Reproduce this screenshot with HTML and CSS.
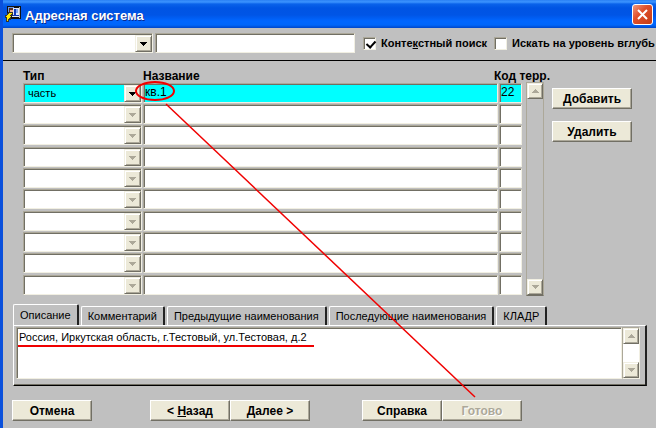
FILE: index.html
```html
<!DOCTYPE html>
<html lang="ru">
<head>
    <meta charset="UTF-8">
    <meta name="viewport" content="width=device-width, initial-scale=1.0">
    <title>Адресная система</title>
    <link rel="stylesheet" href="styles.css">
</head>
<body>
    <svg class="sprite" aria-hidden="true">
        <symbol id="down" viewBox="0 0 7 4"><path d="M0 0h7v1h-1v1h-1v1h-1v1h-1v-1h-1v-1h-1v-1h-1z"/></symbol>
        <symbol id="up" viewBox="0 0 7 4"><path d="M3 0h1v1h1v1h1v1h1v1h-7v-1h1v-1h1v-1h1z"/></symbol>
    </svg>

    <div class="window">
        <header class="title-bar">
            <svg class="app-icon" viewBox="0 0 16 16" shape-rendering="crispEdges" aria-hidden="true">
                <path fill="#111" d="M2 0h14v13H2z"/>
                <path fill="#6f9be8" d="M3 1h6v8H3z"/>
                <path fill="#dfe8fa" d="M8 2h6v9H7V9h1z"/>
                <path fill="#1238b8" d="M9 3h2v6h3v1H8V9h1z"/>
                <path fill="#7fa6ee" d="M11 3h2v4h-2z"/>
                <path fill="#f0b090" d="M5 3h3v3H5z"/>
                <path fill="#5a3020" d="M4 2h4v2H5v2H4z"/>
                <path fill="#b8b8b8" d="M14 1h1v11h-1z"/>
                <path fill="#333" d="M3 6h5v4H6v4H4v2H1v-4H0V9h2z"/>
                <path fill="#ffe800" d="M4 7h3v1H6v1H5v1h1v1H5v1H4v1H3v2H2v-4H1v-1h1V9h1V8h1z"/>
            </svg>
            <h1>Адресная система</h1>
            <button class="close" aria-label="Закрыть">
                <svg viewBox="0 0 11 11" aria-hidden="true"><path d="M1 1l9 9M10 1l-9 9"/></svg>
            </button>
        </header>

        <main>
            <div class="search">
                <div class="combo">
                    <select class="sunken" aria-label="Тип поиска"><option></option></select>
                    <span class="arrow"><svg><use href="#down"/></svg></span>
                </div>
                <input class="sunken query" type="text" aria-label="Строка поиска">
                <label class="check first"><input type="checkbox" checked><span>Конте<u>к</u>стный поиск</span></label>
                <label class="check"><input type="checkbox"><span>Искать на уровень вглубь</span></label>
            </div>

            <div class="addresses">
                <div class="grid">
                    <table>
                        <thead>
                            <tr><th class="type">Тип</th><th>Название</th><th class="code"><span>Код терр.</span></th></tr>
                        </thead>
                        <tbody id="rows">
                            <tr class="current">
                                <td><div class="combo">
                                    <select class="sunken" aria-label="Тип"><option>часть</option></select>
                                    <span class="arrow"><svg><use href="#down"/></svg></span>
                                </div></td>
                                <td><input class="sunken" type="text" aria-label="Название" value="кв.1"></td>
                                <td><input class="sunken" type="text" aria-label="Код терр." value="22"></td>
                            </tr>
                        </tbody>
                    </table>
                </div>
                <div class="scrollbar">
                    <button aria-label="Вверх" disabled><svg><use href="#up"/></svg></button>
                    <button aria-label="Вниз" disabled><svg><use href="#down"/></svg></button>
                </div>
                <div class="actions">
                    <button class="btn">Добавить</button>
                    <button class="btn">Удалить</button>
                </div>
            </div>

            <div class="details">
                <div class="tabs" role="tablist">
                    <button class="tab active" role="tab" aria-selected="true">Описание</button>
                    <button class="tab" role="tab">Комментарий</button>
                    <button class="tab" role="tab">Предыдущие наименования</button>
                    <button class="tab" role="tab">Последующие наименования</button>
                    <button class="tab" role="tab">КЛАДР</button>
                </div>
                <div class="panel">
                    <textarea class="sunken" aria-label="Описание">Россия, Иркутская область, г.Тестовый, ул.Тестовая, д.2</textarea>
                    <div class="scrollbar light">
                        <button aria-label="Вверх" disabled><svg><use href="#up"/></svg></button>
                        <button aria-label="Вниз" disabled><svg><use href="#down"/></svg></button>
                    </div>
                </div>
            </div>

            <footer>
                <button class="btn">Отмена</button>
                <div class="group">
                    <button class="btn">&lt; <u>Н</u>азад</button>
                    <button class="btn">Далее &gt;</button>
                </div>
                <div class="group">
                    <button class="btn">Справка</button>
                    <button class="btn" disabled>Готово</button>
                </div>
            </footer>
        </main>

        <!-- red marks over the form -->
        <svg class="marks" aria-hidden="true">
            <ellipse cx="155" cy="91" rx="19" ry="9"/>
            <path class="thin" d="M166 104L475 397"/>
            <path d="M18 346H314"/>
        </svg>
    </div>

    <script>
        const rows = document.getElementById('rows');
        const firstRow = rows.querySelector('tr');

        for (let i = 0; i < 9; i++) {
            const row = firstRow.cloneNode(true);
            row.className = '';
            row.querySelector('option').textContent = '';
            row.querySelectorAll('input').forEach(input => input.setAttribute('value', ''));
            rows.appendChild(row);
        }
    </script>
</body>
</html>
```
FILE: styles.css
```css
* {
    box-sizing: border-box;
}
body {
    margin: 0;
    font-family: "Liberation Sans", Arial, sans-serif;
    font-size: 11px;
    color: #000;
    background: #c0c0c0;
}
button, input, select, textarea {
    font: inherit;
    color: inherit;
    margin: 0;
    border-radius: 0;
}
.sprite {
    display: none;
}
.window {
    position: relative;
    min-height: 100vh;
    border-left: 3px solid #0a50dc;
    overflow: hidden;
}

/* title bar */
.title-bar {
    display: flex;
    align-items: center;
    height: 28px;
    margin-left: -3px;
    padding: 0 3px 0 5px;
    background: linear-gradient(#2a80f4 0, #3c94ff 2px, #0a62ea 4px, #0054e3 8px, #0055e6 15px, #0066ff 21px, #0066fa 25px, #0046c8 28px);
}
.app-icon {
    width: 16px;
    height: 16px;
}
.title-bar h1 {
    flex: 1;
    margin: 0;
    padding: 3px 0 0 4px;
    font-size: 13px;
    line-height: 16px;
    color: #fff;
    text-shadow: 1px 1px #0a2a90;
}
.close {
    display: flex;
    align-items: center;
    justify-content: center;
    width: 21px;
    height: 21px;
    padding: 0;
    border: 1px solid #fff;
    border-radius: 3px;
    background: linear-gradient(135deg, #f09a80, #e0502c 40%, #c43c14);
}
.close svg {
    width: 11px;
    height: 11px;
    stroke: #fff;
    stroke-width: 2;
}

/* shared controls */
.sunken {
    display: block;
    width: 100%;
    height: 20px;
    padding: 0 1px;
    border: 1px solid;
    border-color: #aca899 #f1efe2 #f1efe2 #aca899;
    outline: 0;
    background: #fff;
    box-shadow: inset 1px 1px #716f64;
    appearance: none;
}
.combo {
    position: relative;
}
.combo .sunken {
    padding-left: 4px;
}
.arrow {
    position: absolute;
    top: 2px;
    right: 1px;
    bottom: 1px;
    width: 17px;
    pointer-events: none;
}
.arrow, .scrollbar button {
    display: flex;
    align-items: center;
    justify-content: center;
    padding: 0;
    border: 1px solid;
    border-color: #f1efe2 #716f64 #716f64 #f1efe2;
    background: #ece9d8;
    box-shadow: inset 1px 1px #fff, inset -1px -1px #aca899;
}
.arrow svg, .scrollbar svg {
    width: 7px;
    height: 4px;
    shape-rendering: crispEdges;
}
.btn {
    width: 80px;
    height: 21px;
    padding: 0;
    border: 1px solid;
    border-color: #fff #716f64 #716f64 #fff;
    background: #ece9d8;
    box-shadow: inset -1px -1px #aca899;
    font-size: 12px;
    font-weight: bold;
    line-height: 18px;
}
.btn:disabled {
    color: #aca899;
    text-shadow: 1px 1px #fff;
}
.scrollbar {
    display: flex;
    flex-direction: column;
    justify-content: space-between;
    width: 18px;
    border: 1px solid;
    border-color: #aca899 #aca899 #716f64 #aca899;
}
.scrollbar button {
    height: 16px;
    color: #aca899;
}
.scrollbar svg {
    fill: #aca899;
}
.scrollbar.light {
    border-color: #aca899 #f1efe2 #f1efe2 #aca899;
    background: #fff;
}

/* search line */
.search {
    display: flex;
    align-items: flex-start;
    gap: 2px;
    height: 33px;
    padding: 5px 0 0 9px;
    border-bottom: 1px solid #000;
}
.search .combo {
    width: 141px;
}
.search .query {
    width: 200px;
}
.check {
    display: flex;
    align-items: center;
    gap: 5px;
    padding-top: 3px;
    font-weight: bold;
    line-height: 14px;
    white-space: nowrap;
}
.check.first {
    width: 129px;
    margin-left: 6px;
}
.check input {
    flex: none;
    width: 13px;
    height: 13px;
    border: 1px solid;
    border-color: #aca899 #f1efe2 #f1efe2 #aca899;
    background: #fff;
    box-shadow: inset 1px 1px #716f64;
    appearance: none;
}
.check input:checked::after {
    content: "";
    display: block;
    width: 4px;
    height: 7px;
    margin: 1px 0 0 4px;
    border: solid #000;
    border-width: 0 2px 2px 0;
    transform: rotate(42deg);
}

/* address table */
.addresses {
    display: flex;
    padding: 8px 24px 0 20px;
}
.grid {
    flex: 1;
    min-width: 0;
}
table {
    width: 100%;
    table-layout: fixed;
    border-spacing: 0;
}
th {
    height: 14px;
    padding: 0;
    font-size: 12px;
    line-height: 14px;
    text-align: left;
}
th.type {
    width: 120px;
}
th.code {
    width: 24px;
    white-space: nowrap;
}
th.code span {
    display: block;
    margin-left: -5px;
}
td {
    height: 21px;
    padding: 0 1px 0 0;
    vertical-align: top;
}
tr:nth-child(3n) td {
    height: 22px;
}
td input {
    font-size: 12px;
}
td input.sunken {
    padding-bottom: 2px;
}
td .arrow svg {
    fill: #aca899;
}
.current .sunken {
    background: #0ff;
}
.current .arrow svg {
    fill: #000;
}
.addresses .scrollbar {
    margin: 13px 0 0 3px;
}
.actions {
    display: flex;
    flex-direction: column;
    gap: 12px;
    padding: 19px 0 0 8px;
}

/* tabs and description */
.details {
    padding: 8px 9px 0 10px;
}
.tabs {
    display: flex;
    align-items: flex-end;
    gap: 2px;
}
.tab {
    height: 19px;
    padding: 0 6px;
    border: solid;
    border-width: 1px 2px 0 1px;
    border-color: #fff #222 #fff #fff;
    border-radius: 2px 2px 0 0;
    background: #c0c0c0;
    line-height: 18px;
    white-space: nowrap;
}
.tab.active {
    height: 21px;
}
.panel {
    display: flex;
    height: 61px;
    padding: 1px 5px 6px 2px;
    border: solid;
    border-width: 1px 2px 1px 1px;
    border-color: #fff #222 #000 #fff;
    box-shadow: inset 0 -1px #716f64;
}
.panel textarea {
    flex: 1;
    height: auto;
    padding: 2px;
    line-height: 14px;
    resize: none;
    overflow: hidden;
}

footer {
    display: flex;
    padding: 14px 0 6px 9px;
}
.group {
    display: flex;
    margin-left: 58px;
}
.group + .group {
    margin-left: 52px;
}

.marks {
    position: absolute;
    top: 0;
    left: -3px;
    width: 656px;
    height: 428px;
    fill: none;
    stroke: #f00000;
    stroke-width: 2;
    pointer-events: none;
}
.marks .thin {
    stroke-width: 1.5;
}
```
